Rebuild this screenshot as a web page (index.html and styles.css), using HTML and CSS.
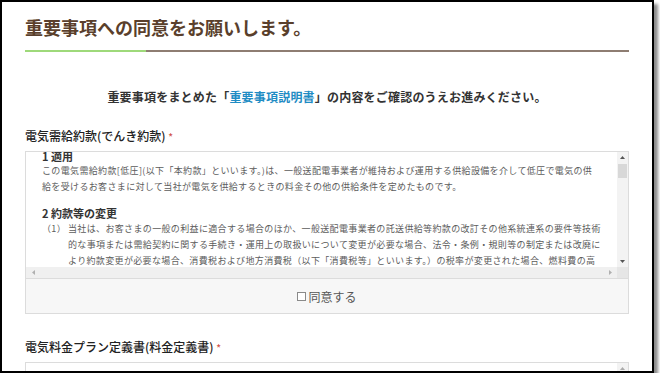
FILE: index.html
```html
<!DOCTYPE html>
<html lang="ja">
<head>
  <meta charset="UTF-8" />
  <meta name="viewport" content="width=device-width, initial-scale=1.0" />
  <title>重要事項への同意</title>
  <link rel="stylesheet" href="styles.css">
</head>
<body>
  <div class="frame">
    <h1 class="page-title">重要事項への同意をお願いします。</h1>
    <div class="title-rule"></div>

    <p class="intro">重要事項をまとめた「<a href="#" class="doc-link">重要事項説明書</a>」の内容をご確認のうえお進みください。</p>

    <!-- 電気需給約款 -->
    <div class="field">
      <div class="field-label">電気需給約款(でんき約款) <span class="req">*</span></div>
      <div class="terms-panel">
        <div class="terms-scroll">
          <div class="terms-body">
            <h3 class="terms-head first">1 適用</h3>
            <p class="terms-text">この電気需給約款[低圧](以下「本約款」といいます。)は、一般送配電事業者が維持および運用する供給設備を介して低圧で電気の供給を受けるお客さまに対して当社が電気を供給するときの料金その他の供給条件を定めたものです。</p>

            <h3 class="terms-head">2 約款等の変更</h3>
            <div class="terms-item">
              <span class="item-no">（1）</span>
              <span class="item-text">当社は、お客さまの一般の利益に適合する場合のほか、一般送配電事業者の託送供給等約款の改訂その他系統連系の要件等技術的な事項または需給契約に関する手続き・運用上の取扱いについて変更が必要な場合、法令・条例・規則等の制定または改廃により約款変更が必要な場合、消費税および地方消費税（以下「消費税等」といいます。）の税率が変更された場合、燃料費の高騰等により約款変更が必要な場合、その他当社が必要と判断した場合には、本約款（電気料金プラン定義書を含みます。）を変更することがあります。</span>
            </div>
          </div>
          <div class="vbar">
            <span class="sb-btn"><svg width="5" height="3" viewBox="0 0 5 3"><path d="M0 3L2.5 0L5 3z" fill="#555"/></svg></span>
            <span class="vbar-track"><span class="vbar-thumb"></span></span>
            <span class="sb-btn"><svg width="5" height="3" viewBox="0 0 5 3"><path d="M0 0L2.5 3L5 0z" fill="#555"/></svg></span>
          </div>
          <div class="hbar">
            <span class="sb-btn wide"><svg width="3" height="5" viewBox="0 0 3 5"><path d="M3 0L0 2.5L3 5z" fill="#b0b0b0"/></svg></span>
            <span class="hbar-track"></span>
            <span class="sb-btn wide"><svg width="3" height="5" viewBox="0 0 3 5"><path d="M0 0L3 2.5L0 5z" fill="#b0b0b0"/></svg></span>
          </div>
          <div class="sb-corner"></div>
        </div>
        <div class="agree-row">
          <label class="agree"><input type="checkbox" class="agree-box">同意する</label>
        </div>
      </div>
    </div>

    <!-- 電気料金プラン定義書 -->
    <div class="field second">
      <div class="field-label">電気料金プラン定義書(料金定義書) <span class="req">*</span></div>
      <div class="terms-panel">
        <div class="terms-scroll">
          <div class="terms-body lower">
            <h3 class="terms-head">1 適用</h3>
            <p class="terms-text">この電気料金プラン定義書は、本約款に基づき当社が提供する電気料金プランの料金その他の供給条件を定めたものです。</p>
          </div>
          <div class="vbar">
            <span class="sb-btn"><svg width="5" height="3" viewBox="0 0 5 3"><path d="M0 3L2.5 0L5 3z" fill="#aaa"/></svg></span>
            <span class="vbar-track"></span>
            <span class="sb-btn"><svg width="5" height="3" viewBox="0 0 5 3"><path d="M0 0L2.5 3L5 0z" fill="#aaa"/></svg></span>
          </div>
          <div class="hbar">
            <span class="sb-btn wide"></span>
            <span class="hbar-track"></span>
            <span class="sb-btn wide"></span>
          </div>
          <div class="sb-corner"></div>
        </div>
      </div>
    </div>
  </div>
</body>
</html>
```

FILE: styles.css
```css
body {
  margin: 0;
  background: #ffffff;
  font-family: "Noto Sans CJK JP", "Noto Sans", sans-serif;
}

/* 外枠 */
.frame {
  box-sizing: border-box;
  width: 654px;
  height: 373px;
  border: 2px solid #000;
  padding: 12px 23px 0 23px;
  background: #fff;
  box-shadow: 4px 4px 3px rgba(0, 0, 0, 0.45);
  overflow: hidden;
}

.page-title {
  margin: 0;
  font-size: 18px;
  line-height: 26px;
  font-weight: bold;
  color: #5a3f2c;
}
.title-rule {
  height: 2px;
  margin-top: 10px;
  background: linear-gradient(to right, #9ed97a 0, #9ed97a 20%, #8e7d72 20%, #8e7d72 100%);
}

.intro {
  margin: 35px 0 0 0;
  text-align: center;
  font-size: 12px;
  line-height: 20px;
  letter-spacing: 0.2px;
  font-weight: bold;
  color: #333;
}
.doc-link {
  color: #1f8cc4;
  text-decoration: none;
}

.field {
  margin-top: 19px;
}
.field.second {
  margin-top: 23px;
}
.field-label {
  font-size: 12px;
  line-height: 20px;
  font-weight: 500;
  color: #222;
  margin-bottom: 4px;
}
.req {
  color: #d2574f;
  font-size: 10px;
}

.terms-panel {
  border: 1px solid #dcdcdc;
  background: #fff;
}
.terms-scroll {
  display: grid;
  grid-template-columns: 1fr 11px;
  grid-template-rows: 115px 11px;
}
.terms-body {
  overflow: hidden;
  padding: 0 16px;
  color: #5c5c5c;
}
.terms-body.lower {
  padding-top: 12px;
}
.terms-head {
  margin: 10px 0 0 0;
  font-size: 11px;
  line-height: 16px;
  font-weight: bold;
  color: #333;
}
.terms-head.first {
  margin-top: -3px;
  line-height: 14px;
}
.terms-text {
  margin: 0;
  font-size: 9px;
  line-height: 16px;
  letter-spacing: 0.35px;
}
.terms-item {
  display: flex;
  font-size: 9px;
  line-height: 16px;
  letter-spacing: 0.35px;
}
.item-no {
  flex: none;
  width: 26px;
}
.item-text {
  flex: 1;
}

/* スクロールバー */
.vbar {
  display: flex;
  flex-direction: column;
  background: #f3f3f3;
}
.vbar-track {
  flex: 1;
  padding-top: 1px;
}
.vbar-thumb {
  display: block;
  height: 14px;
  margin: 0 1px;
  background: #d8d8d8;
}
.hbar {
  display: flex;
  background: #f0f0f0;
}
.hbar-track {
  flex: 1;
}
.sb-btn {
  flex: none;
  width: 11px;
  height: 11px;
  display: flex;
  align-items: center;
  justify-content: center;
}
.sb-btn.wide {
  width: 14px;
}
.sb-corner {
  background: #e6e6e6;
}

.agree-row {
  border-top: 1px solid #dcdcdc;
  background: #f7f7f7;
  height: 34px;
  display: flex;
  justify-content: center;
  align-items: center;
}
.agree {
  display: flex;
  align-items: center;
  font-size: 12px;
  color: #555;
}
.agree-box {
  appearance: none;
  -webkit-appearance: none;
  width: 9px;
  height: 9px;
  margin: 0 2px 0 0;
  border: 1px solid #8a8a8a;
  background: #fff;
}
```
